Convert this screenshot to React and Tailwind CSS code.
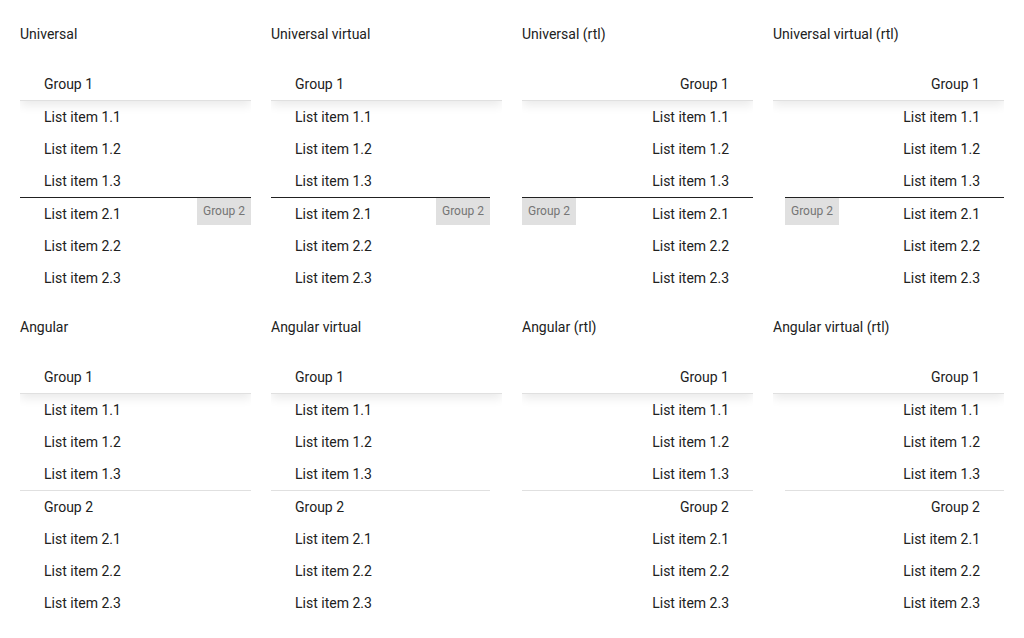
const groups = [
  { name: "Group 1", items: ["List item 1.1", "List item 1.2", "List item 1.3"] },
  { name: "Group 2", items: ["List item 2.1", "List item 2.2", "List item 2.3"] },
];

function Row({ children }) {
  return <div className="h-8 leading-8 ps-6 text-sm text-[#212121]">{children}</div>;
}

function Header({ children }) {
  return (
    <div className="relative z-10 h-[33px] leading-8 ps-6 bg-white text-sm text-[#212121] border-b border-[#e0e0e0] shadow-[0_4px_10px_rgba(0,0,0,0.09)]">
      {children}
    </div>
  );
}

function UniversalList({ rtl, virtual }) {
  return (
    <div dir={rtl ? "rtl" : "ltr"} className="h-[226px] overflow-hidden">
      <Header>{groups[0].name}</Header>
      <div className={virtual ? "me-3" : ""}>
        {groups[0].items.map((it) => (
          <Row key={it}>{it}</Row>
        ))}
        <div className="relative border-t border-[#212121]">
          <div className="absolute top-0 end-0 h-[27px] leading-[27px] px-1.5 bg-[#e0e0e0] text-xs text-[#757575]">
            {groups[1].name}
          </div>
          {groups[1].items.map((it) => (
            <Row key={it}>{it}</Row>
          ))}
        </div>
      </div>
    </div>
  );
}

function AngularList({ rtl, virtual }) {
  return (
    <div dir={rtl ? "rtl" : "ltr"} className="h-[258px] overflow-hidden">
      <Header>{groups[0].name}</Header>
      <div className={virtual ? "me-3" : ""}>
        {groups[0].items.map((it) => (
          <Row key={it}>{it}</Row>
        ))}
        <div className="border-t border-[#e0e0e0]">
          <Row>{groups[1].name}</Row>
          {groups[1].items.map((it) => (
            <Row key={it}>{it}</Row>
          ))}
        </div>
      </div>
    </div>
  );
}

function Section({ title, children }) {
  return (
    <div>
      <div className="h-5 leading-5 text-sm text-[#212121]">{title}</div>
      <div className="mt-6">{children}</div>
    </div>
  );
}

export default function App() {
  return (
    <div className="min-h-screen bg-white px-5 pt-6 font-['Roboto',sans-serif]">
      <div className="grid grid-cols-4 gap-x-5 gap-y-[23px]">
        <Section title="Universal"><UniversalList /></Section>
        <Section title="Universal virtual"><UniversalList virtual /></Section>
        <Section title="Universal (rtl)"><UniversalList rtl /></Section>
        <Section title="Universal virtual (rtl)"><UniversalList rtl virtual /></Section>
        <Section title="Angular"><AngularList /></Section>
        <Section title="Angular virtual"><AngularList virtual /></Section>
        <Section title="Angular (rtl)"><AngularList rtl /></Section>
        <Section title="Angular virtual (rtl)"><AngularList rtl virtual /></Section>
      </div>
    </div>
  );
}
